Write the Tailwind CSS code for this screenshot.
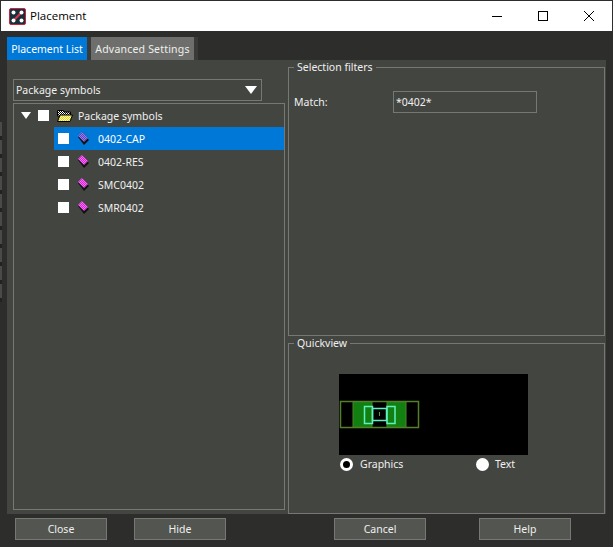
<!DOCTYPE html>
<html lang="en">
<head>
<meta charset="UTF-8">
<title>Placement</title>
<script src="https://cdn.jsdelivr.net/npm/@tailwindcss/browser@4"></script>
</head>
<body class="relative bg-[#2d2d2b] w-[613px] h-[547px] overflow-hidden font-['Noto_Sans',sans-serif] text-[10.5px] text-[#f0f0ee]">

<!-- shared dither patterns for the tree icons -->
<svg class="absolute w-0 h-0">
    <defs>
        <pattern id="ditherBlue" width="2" height="2" patternUnits="userSpaceOnUse">
            <rect width="2" height="2" fill="#9a78ee"/><rect width="1" height="1" fill="#5a48b8"/><rect x="1" y="1" width="1" height="1" fill="#5a48b8"/>
        </pattern>
        <pattern id="ditherPink" width="2" height="2" patternUnits="userSpaceOnUse">
            <rect width="2" height="2" fill="#ff66ff"/><rect width="1" height="1" fill="#c830c8"/><rect x="1" y="1" width="1" height="1" fill="#c830c8"/>
        </pattern>
        <pattern id="ditherPaper" width="2" height="2" patternUnits="userSpaceOnUse">
            <rect width="2" height="2" fill="#fff"/><rect width="1" height="1" fill="#000"/><rect x="1" y="1" width="1" height="1" fill="#000"/>
        </pattern>
        <pattern id="ditherYellow" width="2" height="2" patternUnits="userSpaceOnUse">
            <rect width="2" height="2" fill="#fffb90"/><rect width="1" height="1" fill="#d8d040"/><rect x="1" y="1" width="1" height="1" fill="#d8d040"/>
        </pattern>
    </defs>
</svg>

<!-- marks at the left screen edge behind the dialog -->
<div class="absolute left-0 top-[122px] w-[2px] h-[180px] bg-[repeating-linear-gradient(to_bottom,#4a4b49_0,#4a4b49_14px,#222_14px,#222_18px)]"></div>

<!-- Title bar -->
<div class="mt-px ml-px mr-px h-[30px] bg-white flex items-center text-black">
    <svg class="ml-2 w-[17px] h-[17px]" viewBox="0 0 17 17">
        <rect x="0.5" y="0.5" width="16" height="16" rx="1.5" fill="#17303c" stroke="#d0213f"/>
        <path d="M5 12 L12 5" stroke="#e0304a" stroke-width="2"/>
        <circle cx="4.5" cy="4.5" r="2" fill="#fff"/>
        <circle cx="12.5" cy="4.5" r="2" fill="#fff"/>
        <circle cx="4.5" cy="12.5" r="2" fill="#fff"/>
        <circle cx="12.5" cy="12.5" r="2" fill="#fff"/>
    </svg>
    <span class="ml-[4px] font-['Open_Sans',sans-serif] text-[11.5px]">Placement</span>
    <div class="ml-auto flex">
        <div class="w-[46px] h-[30px] flex items-center justify-center">
            <svg class="w-[10px] h-[10px]" viewBox="0 0 10 10"><path d="M0 5.5H10" stroke="#000"/></svg>
        </div>
        <div class="w-[46px] h-[30px] flex items-center justify-center">
            <svg class="w-[10px] h-[10px]" viewBox="0 0 10 10"><rect x="0.5" y="0.5" width="9" height="9" fill="none" stroke="#000"/></svg>
        </div>
        <div class="w-[46px] h-[30px] flex items-center justify-center">
            <svg class="w-[10px] h-[10px]" viewBox="0 0 10 10"><path d="M0 0L10 10M10 0L0 10" stroke="#000" stroke-width="1"/></svg>
        </div>
    </div>
</div>

<!-- Tabs -->
<div class="ml-[7px] mt-[6px] h-[23px] w-[191px] flex bg-[#3a3b38] whitespace-nowrap">
    <div class="w-[80px] bg-[#0078d7] text-white flex items-center justify-center"><span class="pt-[2px]">Placement List</span></div>
    <div class="ml-[4px] w-[103px] bg-[#6e6f6c] flex items-center justify-center"><span class="pt-[2px] tracking-[0.2px]">Advanced Settings</span></div>
</div>

<!-- Tab page -->
<div class="ml-[7px] w-[599px] h-[454px] bg-[#434541] flex pl-[6px] pt-[6px]">
    <div class="w-[272px] pt-[13px] flex flex-col gap-[2px]">
        <div class="w-[249px] h-[22px] border border-[#777875] flex items-center pl-[2px] pr-[4px]">
            <span class="pt-[2px]">Package symbols</span>
            <svg class="ml-auto w-[12px] h-[8px]" viewBox="0 0 12 8"><path d="M0 0H12L6 8Z" fill="#fff"/></svg>
        </div>
        <div class="w-[272px] h-[407px] border border-[#777875] flex flex-col">
            <div class="h-[23px] flex items-center">
                <svg class="ml-[7px] w-[10px] h-[7px]" viewBox="0 0 10 7"><path d="M0 0H10L5 7Z" fill="#fff"/></svg>
                <span class="ml-[7px] w-[11px] h-[11px] bg-white"></span>
                <svg class="ml-[8px] w-[16px] h-[13px]" viewBox="0 0 16 13">
                    <path d="M0.5 1.5H6.5L7.5 3H13.5V7H0.5Z" fill="url(#ditherPaper)" stroke="#000"/>
                    <path d="M0.5 12.5L3 6H15.5L13 12.5Z" fill="url(#ditherYellow)" stroke="#000"/>
                </svg>
                <span class="ml-[5px] pt-[2px]">Package symbols</span>
            </div>
            <div class="ml-[40px] h-[23px] bg-[#0078d7] flex items-center">
                <span class="ml-[3px] w-[13px] h-[13px] bg-white border border-[#0078d7]"></span>
                <svg class="ml-[8px] w-[11px] h-[14px]" viewBox="0 0 11 14"><path d="M0 5L6 13L11 8L5 2Z" fill="#111"/><path d="M0 4L4 0L10 6L6 10Z" fill="url(#ditherBlue)"/></svg>
                <span class="ml-[9px] pt-[2px] text-white">0402-CAP</span>
            </div>
            <div class="ml-[40px] h-[23px] flex items-center">
                <span class="ml-[4px] w-[11px] h-[11px] bg-white"></span>
                <svg class="ml-[9px] w-[11px] h-[14px]" viewBox="0 0 11 14"><path d="M0 5L6 13L11 8L5 2Z" fill="#111"/><path d="M0 4L4 0L10 6L6 10Z" fill="url(#ditherPink)"/></svg>
                <span class="ml-[9px] pt-[2px]">0402-RES</span>
            </div>
            <div class="ml-[40px] h-[23px] flex items-center">
                <span class="ml-[4px] w-[11px] h-[11px] bg-white"></span>
                <svg class="ml-[9px] w-[11px] h-[14px]" viewBox="0 0 11 14"><path d="M0 5L6 13L11 8L5 2Z" fill="#111"/><path d="M0 4L4 0L10 6L6 10Z" fill="url(#ditherPink)"/></svg>
                <span class="ml-[9px] pt-[2px]">SMC0402</span>
            </div>
            <div class="ml-[40px] h-[23px] flex items-center">
                <span class="ml-[4px] w-[11px] h-[11px] bg-white"></span>
                <svg class="ml-[9px] w-[11px] h-[14px]" viewBox="0 0 11 14"><path d="M0 5L6 13L11 8L5 2Z" fill="#111"/><path d="M0 4L4 0L10 6L6 10Z" fill="url(#ditherPink)"/></svg>
                <span class="ml-[9px] pt-[2px]">SMR0402</span>
            </div>
        </div>
    </div>

    <div class="ml-[3px] w-[317px] -mt-[6px] pt-[1px] flex flex-col">
        <fieldset class="h-[275px] border border-[#777875]">
            <legend class="ml-[5px] px-[3px] leading-[12px] pb-[1px]">Selection filters</legend>
            <div class="mt-[17px] ml-[5px] flex items-center h-[22px]">
                <span class="w-[99px] pt-[2px]">Match:</span>
                <div class="w-[144px] h-[22px] border border-[#777875] flex items-center pl-[2px]"><span class="pt-[2px]">*0402*</span></div>
            </div>
        </fieldset>
        <fieldset class="mt-[1px] h-[177px] border border-[#777875]">
            <legend class="ml-[5px] px-[3px] leading-[12px] pb-[1px]">Quickview</legend>
            <svg class="mt-[24px] ml-[50px] w-[189px] h-[81px] bg-black" viewBox="0 0 189 81">
                <rect x="14" y="27" width="19" height="27" fill="#118010"/>
                <rect x="48" y="27" width="19" height="27" fill="#118010"/>
                <rect x="1.5" y="27.5" width="78" height="26" fill="none" stroke="#55802a" stroke-width="1.5"/>
                <path d="M14 27V54M33 27V54M48 27V54M67 27V54" stroke="#55802a"/>
                <rect x="25.5" y="32.5" width="8" height="17" fill="none" stroke="#5ff0c0" stroke-width="1.5"/>
                <rect x="48" y="32.5" width="8" height="17" fill="none" stroke="#5ff0c0" stroke-width="1.5"/>
                <rect x="33.5" y="34.5" width="14" height="12" fill="none" stroke="#5ff0c0" stroke-width="1.5"/>
                <rect x="40" y="38" width="1" height="4" fill="#4f9f3a"/>
            </svg>
            <div class="mt-[2px] flex items-center h-[14px]">
                <span class="ml-[51px] w-[13px] h-[13px] rounded-full bg-white flex items-center justify-center"><span class="w-[7px] h-[7px] rounded-full bg-black"></span></span>
                <span class="ml-[7px] w-[116px] pt-[2px]">Graphics</span>
                <span class="w-[13px] h-[13px] rounded-full bg-white"></span>
                <span class="ml-[6px] pt-[2px]">Text</span>
            </div>
        </fieldset>
    </div>
</div>

<!-- Bottom buttons -->
<div class="mt-[4px] ml-[15px] flex">
    <button class="w-[92px] h-[22px] pt-[2px] border border-[#777875] bg-[#535551]">Close</button>
    <button class="ml-[27px] w-[92px] h-[22px] pt-[2px] border border-[#777875] bg-[#535551]">Hide</button>
    <button class="ml-[108px] w-[92px] h-[22px] pt-[2px] border border-[#777875] bg-[#535551]">Cancel</button>
    <button class="ml-[53px] w-[92px] h-[22px] pt-[2px] border border-[#777875] bg-[#535551]">Help</button>
</div>

</body>
</html>
